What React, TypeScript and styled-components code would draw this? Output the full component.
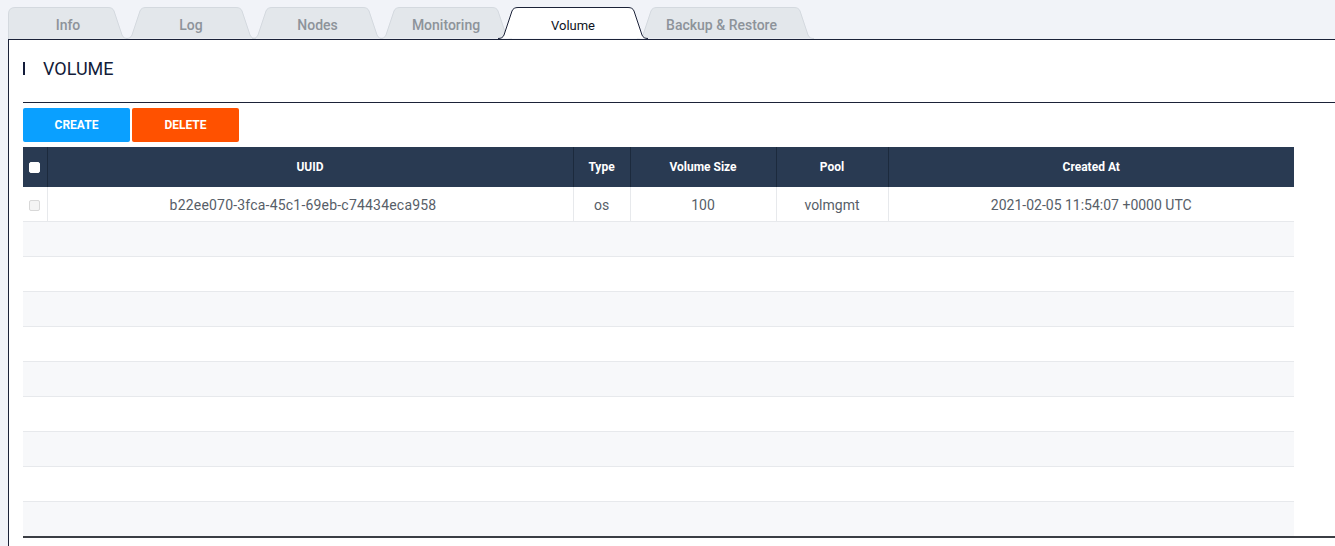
import React from 'react'
import styled, { createGlobalStyle } from 'styled-components'

const GlobalStyle = createGlobalStyle`
    html, body {
        margin: 0;
        padding: 0;
        background: #f1f3f8;
        font-family: Roboto, "Liberation Sans", Arial, sans-serif;
    }
`

interface TabItem {
    label: string
    width: number
    overlap: number
    shift?: number
    first?: boolean
    active?: boolean
}

const tabs: TabItem[] = [
    { label: 'Info', width: 120, overlap: 0, first: true },
    { label: 'Log', width: 130, overlap: 2 },
    { label: 'Nodes', width: 131, overlap: 4 },
    { label: 'Monitoring', width: 132, overlap: 3 },
    { label: 'Volume', width: 150, overlap: 14, active: true },
    { label: 'Backup & Restore', width: 177, overlap: 11, shift: 8 },
]

const columns = [
    { title: 'UUID', width: 526 },
    { title: 'Type', width: 57 },
    { title: 'Volume Size', width: 146 },
    { title: 'Pool', width: 112 },
    { title: 'Created At', width: 406 },
]

const volumes = [
    {
        uuid: 'b22ee070-3fca-45c1-69eb-c74434eca958',
        type: 'os',
        size: '100',
        pool: 'volmgmt',
        createdAt: '2021-02-05 11:54:07 +0000 UTC',
    },
]

const EMPTY_ROWS = 9

// chrome-like tab outline, open at the bottom so the stroke never closes
const tabPath = (w: number, first?: boolean) => {
    const right = `L${w - 20},0.5 C${w - 17},0.5 ${w - 15},1.5 ${w - 14},4 L${w - 6},28 C${w - 5},30.5 ${w - 3},31.5 ${w},31.5`
    if (first) return `M0.5,32 L0.5,7 Q0.5,0.5 7,0.5 ${right}`
    return `M0,31.5 C3,31.5 5,30.5 6,28 L14,4 C15,1.5 17,0.5 20,0.5 ${right}`
}

const Tab: React.FC<{ tab: TabItem }> = ({ tab }) => (
    <TabStyle $width={tab.width} $overlap={tab.overlap} $shift={tab.shift || 0} $active={tab.active}>
        <svg width={tab.width} height={32} viewBox={`0 0 ${tab.width} 32`}>
            <path
                d={tabPath(tab.width, tab.first)}
                fill={tab.active ? '#ffffff' : '#e3e7eb'}
                stroke={tab.active ? '#1b2238' : '#d4d9df'}
                strokeWidth={1}
            />
        </svg>
        <span>{tab.label}</span>
    </TabStyle>
)

const App: React.FC = () => {
    return (
        <Page>
            <GlobalStyle />
            <TabBar>
                {tabs.map(tab => (
                    <Tab key={tab.label} tab={tab} />
                ))}
            </TabBar>

            <Panel>
                <SectionTitle>
                    <TitleBar />
                    VOLUME
                </SectionTitle>

                <Content>
                    <Toolbar>
                        <ActionButton $color="#0aa0ff">CREATE</ActionButton>
                        <ActionButton $color="#ff5100">DELETE</ActionButton>
                    </Toolbar>

                    <TableWrap>
                        <Table>
                            <colgroup>
                                <col style={{ width: 24 }} />
                                {columns.map(c => (
                                    <col key={c.title} style={{ width: c.width }} />
                                ))}
                            </colgroup>
                            <thead>
                                <tr>
                                    <th>
                                        <Check $header />
                                    </th>
                                    {columns.map(c => (
                                        <th key={c.title}>{c.title}</th>
                                    ))}
                                </tr>
                            </thead>
                            <tbody>
                                {volumes.map(v => (
                                    <Row key={v.uuid}>
                                        <td>
                                            <Check />
                                        </td>
                                        <td className="uuid">{v.uuid}</td>
                                        <td>{v.type}</td>
                                        <td>{v.size}</td>
                                        <td>{v.pool}</td>
                                        <td>{v.createdAt}</td>
                                    </Row>
                                ))}
                                {Array.from({ length: EMPTY_ROWS }).map((_, i) => (
                                    <Row key={i}>
                                        <td colSpan={6} className="empty"></td>
                                    </Row>
                                ))}
                            </tbody>
                        </Table>
                    </TableWrap>
                </Content>
            </Panel>
        </Page>
    )
}

export default App

const Page = styled.div`
    height: 100vh;
    box-sizing: border-box;
    padding: 7px 0 0 8px;
    display: flex;
    flex-direction: column;
    overflow: hidden;
`

const TabBar = styled.div`
    display: flex;
    height: 32px;
    align-items: flex-end;
`

const TabStyle = styled.div<{ $width: number; $overlap: number; $shift: number; $active?: boolean }>`
    position: relative;
    width: ${({ $width }) => $width}px;
    height: 32px;
    margin-left: -${({ $overlap }) => $overlap}px;
    z-index: ${({ $active }) => ($active ? 2 : 1)};
    display: flex;
    align-items: center;
    justify-content: center;
    cursor: pointer;

    svg {
        position: absolute;
        left: 0;
        top: 0;
    }

    span {
        position: relative;
        padding-top: 4px;
        padding-right: ${({ $shift }) => $shift}px;
        font-size: ${({ $active }) => ($active ? '13px' : '14px')};
        font-weight: ${({ $active }) => ($active ? 400 : 500)};
        color: ${({ $active }) => ($active ? '#0e1322' : '#8d939a')};
    }
`

const Panel = styled.div`
    flex: 1;
    background: #ffffff;
    border-top: 1px solid #1b2238;
    border-left: 1px solid #1b2238;
`

const SectionTitle = styled.div`
    margin-left: 14px;
    height: 63px;
    display: flex;
    align-items: center;
    border-bottom: 1px solid #1b2238;
    font-size: 18px;
    color: #131c3a;
    padding-bottom: 6px;
    box-sizing: border-box;
`

const TitleBar = styled.span`
    width: 2px;
    height: 13px;
    background: #131c3a;
    margin-right: 18px;
`

const Content = styled.div`
    padding-left: 14px;
`

const Toolbar = styled.div`
    display: flex;
    gap: 2px;
    padding-top: 5px;
`

const ActionButton = styled.button<{ $color: string }>`
    width: 107px;
    height: 34px;
    border: none;
    border-radius: 2px;
    background: ${({ $color }) => $color};
    color: #ffffff;
    font-family: Roboto, "Liberation Sans", Arial, sans-serif;
    font-size: 12px;
    font-weight: 700;
    cursor: pointer;
`

const TableWrap = styled.div`
    margin-top: 5px;
    border-bottom: 2px solid #3b3e44;
`

const Table = styled.table`
    width: 1271px;
    table-layout: fixed;
    border-collapse: collapse;

    th {
        height: 40px;
        padding: 0;
        background: #293a52;
        color: #ffffff;
        font-size: 12px;
        font-weight: 700;
        text-align: center;
        border-left: 1px solid #1c2a3d;
    }

    th:first-child {
        border-left: none;
    }

    td {
        height: 33px;
        padding: 1px 0 0;
        text-align: center;
        font-size: 14px;
        color: #575e68;
        border-left: 1px solid #e7e9ec;
    }

    td.uuid {
        padding-right: 14px;
        letter-spacing: 0.2px;
    }

    td:first-child,
    td.empty {
        border-left: none;
    }
`

const Row = styled.tr`
    border-top: 1px solid #e7e9ec;
    background: #ffffff;

    &:nth-child(even) {
        background: #f7f8fa;
    }

    &:first-child {
        border-top: none;
    }
`

const Check = styled.span<{ $header?: boolean }>`
    display: inline-block;
    vertical-align: middle;
    width: 11px;
    height: 11px;
    border-radius: 2px;
    box-sizing: border-box;
    background: ${({ $header }) => ($header ? '#ffffff' : '#f4f4f4')};
    border: 1px solid ${({ $header }) => ($header ? '#ffffff' : '#d8d8d8')};
`
